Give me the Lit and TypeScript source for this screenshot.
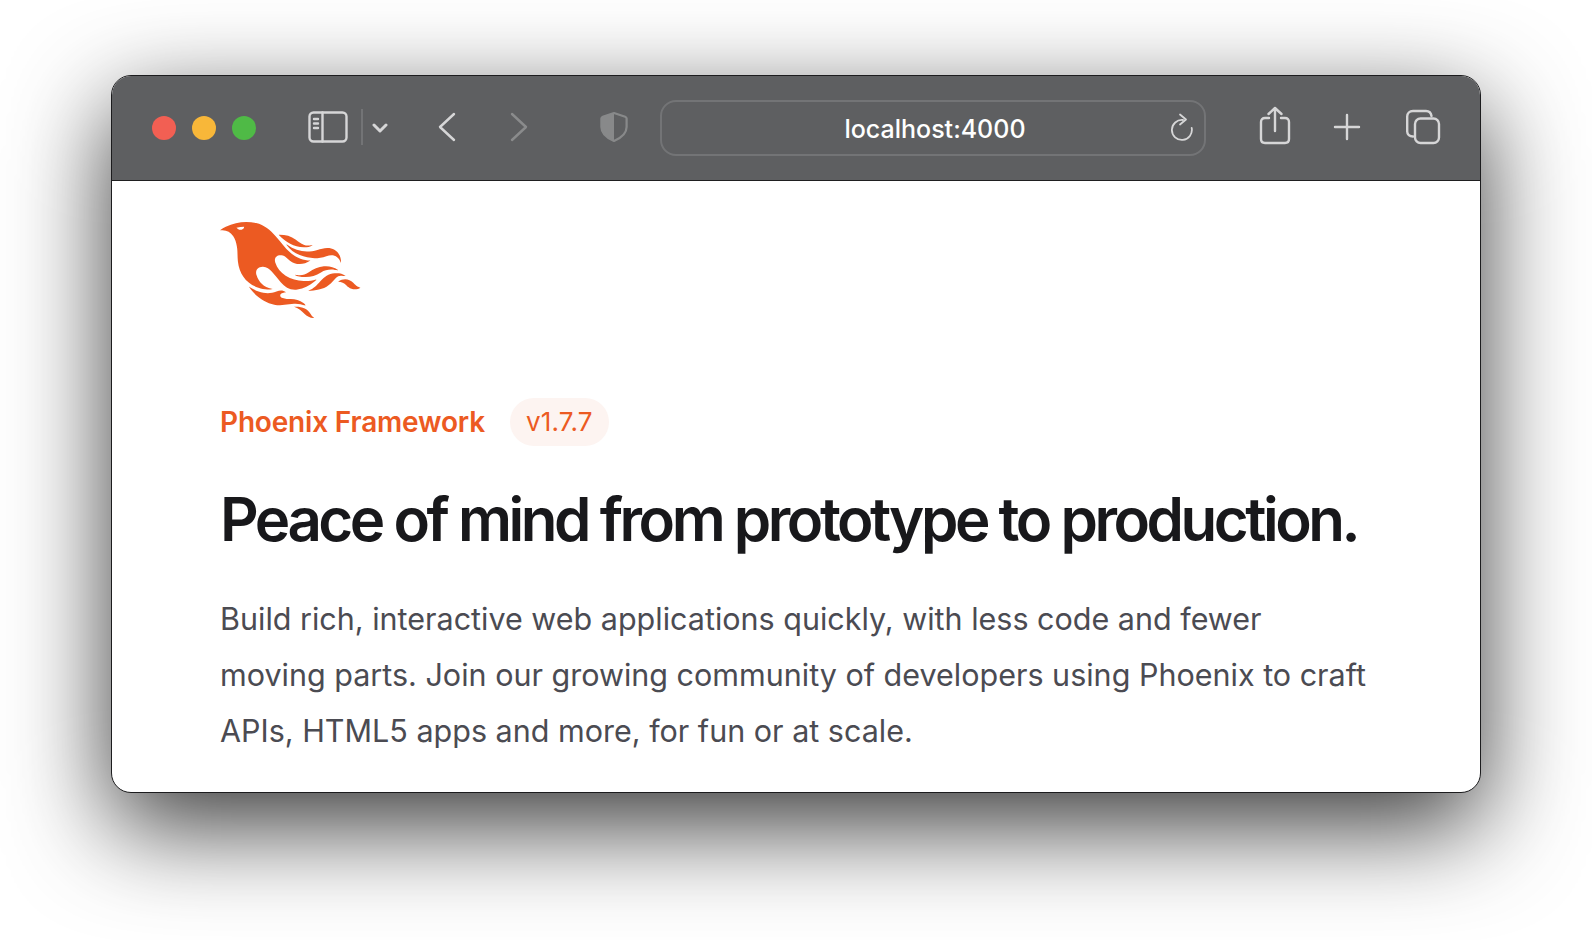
import { LitElement, html, css } from "lit";
import { customElement } from "lit/decorators.js";

const phoenix =
  "m26.371 33.477-.552-.1c-3.92-.729-6.397-3.1-7.57-6.829-.733-2.324.597-4.035 3.035-4.148 1.995-.092 3.362 1.055 4.57 2.39 1.557 1.72 2.984 3.558 4.514 5.305 2.202 2.515 4.797 4.134 8.347 3.634 3.183-.448 5.958-1.725 8.371-3.828.363-.316.761-.592 1.144-.886l-.241-.284c-2.027.63-4.093.841-6.205.735-3.195-.16-6.24-.828-8.964-2.582-2.486-1.601-4.319-3.746-5.19-6.611-.704-2.315.736-3.934 3.135-3.6.948.133 1.746.56 2.463 1.165.583.493 1.143 1.015 1.738 1.493 2.8 2.25 6.712 2.375 10.265-.068-5.842-.026-9.817-3.24-13.308-7.313-1.366-1.594-2.7-3.216-4.095-4.785-2.698-3.036-5.692-5.71-9.79-6.623C12.8-.623 7.745.14 2.893 2.361 1.926 2.804.997 3.319 0 4.149c.494 0 .763.006 1.032 0 2.446-.064 4.28 1.023 5.602 3.024.962 1.457 1.415 3.104 1.761 4.798.513 2.515.247 5.078.544 7.605.761 6.494 4.08 11.026 10.26 13.346 2.267.852 4.591 1.135 7.172.555ZM10.751 3.852c-.976.246-1.756-.148-2.56-.962 1.377-.343 2.592-.476 3.897-.528-.107.848-.607 1.306-1.336 1.49Zm32.002 37.924c-.085-.626-.62-.901-1.04-1.228-1.857-1.446-4.03-1.958-6.333-2-1.375-.026-2.735-.128-4.031-.61-.595-.22-1.26-.505-1.244-1.272.015-.78.693-1 1.31-1.184.505-.15 1.026-.247 1.6-.382-1.46-.936-2.886-1.065-4.787-.3-2.993 1.202-5.943 1.06-8.926-.017-1.684-.608-3.179-1.563-4.735-2.408l-.077.057c1.29 2.115 3.034 3.817 5.004 5.271 3.793 2.8 7.936 4.471 12.784 3.73A66.714 66.714 0 0 1 37 40.877c1.98-.16 3.866.398 5.753.899Zm-9.14-30.345c-.105-.076-.206-.266-.42-.069 1.745 2.36 3.985 4.098 6.683 5.193 4.354 1.767 8.773 2.07 13.293.51 3.51-1.21 6.033-.028 7.343 3.38.19-3.955-2.137-6.837-5.843-7.401-2.084-.318-4.01.373-5.962.94-5.434 1.575-10.485.798-15.094-2.553Zm27.085 15.425c.708.059 1.416.123 2.124.185-1.6-1.405-3.55-1.517-5.523-1.404-3.003.17-5.167 1.903-7.14 3.972-1.739 1.824-3.31 3.87-5.903 4.604.043.078.054.117.066.117.35.005.699.021 1.047.005 3.768-.17 7.317-.965 10.14-3.7.89-.86 1.685-1.817 2.544-2.71.716-.746 1.584-1.159 2.645-1.07Zm-8.753-4.67c-2.812.246-5.254 1.409-7.548 2.943-1.766 1.18-3.654 1.738-5.776 1.37-.374-.066-.75-.114-1.124-.17l-.013.156c.135.07.265.151.405.207.354.14.702.308 1.07.395 4.083.971 7.992.474 11.516-1.803 2.221-1.435 4.521-1.707 7.013-1.336.252.038.503.083.756.107.234.022.479.255.795.003-2.179-1.574-4.526-2.096-7.094-1.872Zm-10.049-9.544c1.475.051 2.943-.142 4.486-1.059-.452.04-.643.04-.827.076-2.126.424-4.033-.04-5.733-1.383-.623-.493-1.257-.974-1.889-1.457-2.503-1.914-5.374-2.555-8.514-2.5.05.154.054.26.108.315 3.417 3.455 7.371 5.836 12.369 6.008Zm24.727 17.731c-2.114-2.097-4.952-2.367-7.578-.537 1.738.078 3.043.632 4.101 1.728.374.388.763.768 1.182 1.106 1.6 1.29 4.311 1.352 5.883.155-1.861-.726-1.861-.726-3.588-2.452Zm-21.058 16.06c-1.858-3.46-4.981-4.24-8.59-4.008a9.667 9.667 0 0 1 2.977 1.39c.84.586 1.547 1.311 2.243 2.055 1.38 1.473 3.534 2.376 4.962 2.07-.656-.412-1.238-.848-1.592-1.507Z";

@customElement("app-root")
export class AppRoot extends LitElement {
  static styles = css`
    :host {
      display: block;
      width: 1592px;
      height: 940px;
      box-sizing: border-box;
      padding: 75px 111px 0 111px;
      background: #fff;
      overflow: hidden;
      font-family: Inter, "Liberation Sans", sans-serif;
    }
    .window {
      height: 718px;
      box-sizing: border-box;
      border: 1px solid #1c1c1e;
      border-radius: 20px;
      overflow: hidden;
      background: #fff;
      box-shadow: 0 33px 100px rgba(0, 0, 0, 0.78);
      display: flex;
      flex-direction: column;
    }
    .toolbar {
      height: 105px;
      flex: none;
      box-sizing: border-box;
      background: #5e5f61;
      border-bottom: 1px solid #1f1f20;
      display: flex;
      align-items: center;
      padding: 0 0 2px 40px;
    }
    .lights {
      display: flex;
      gap: 16px;
      margin: 2px 52px 0 0;
    }
    .light {
      width: 24px;
      height: 24px;
      border-radius: 50%;
    }
    .red { background: #f25f53; }
    .yellow { background: #f8b739; }
    .green { background: #4fba46; }
    svg.icon {
      display: block;
      flex: none;
      fill: none;
      stroke: #d6d6d7;
      stroke-width: 2.4;
      stroke-linecap: round;
      stroke-linejoin: round;
    }
    svg.chevron {
      stroke-width: 3;
      margin-top: 1px;
    }
    svg.back {
      margin-left: 49px;
    }
    svg.forward {
      margin-left: 52px;
      stroke: #8a8b8c;
    }
    svg.shield {
      margin-left: 71px;
      stroke: #88898a;
    }
    .shield-half {
      fill: #88898a;
      stroke: none;
    }
    svg.reload {
      position: absolute;
      right: 10px;
      top: 11px;
      stroke-width: 1.8;
    }
    svg.share {
      margin: 0 0 3px 53px;
    }
    svg.plus {
      margin-left: 42px;
    }
    svg.tabs {
      margin-left: 44px;
    }
    .divider {
      width: 2px;
      height: 36px;
      background: #737476;
      margin: 0 9px 0 13px;
    }
    .address {
      width: 546px;
      height: 56px;
      box-sizing: border-box;
      margin: 2px 0 0 32px;
      padding: 2px 0 0 4px;
      border: 2px solid #737476;
      border-radius: 16px;
      display: flex;
      align-items: center;
      justify-content: center;
      position: relative;
      color: #fff;
      font-size: 25px;
      font-weight: 500;
    }
    .content {
      padding: 41px 0 0 108px;
    }
    .logo {
      display: block;
      width: 142px;
      height: 96px;
      fill: #ec5a22;
    }
    .brand {
      display: flex;
      align-items: center;
      margin-top: 80px;
      height: 48px;
      color: #ec5a22;
      font-size: 28px;
      font-weight: 600;
      letter-spacing: -0.18px;
    }
    .badge {
      margin-left: 25px;
      padding: 0 16px;
      line-height: 48px;
      border-radius: 24px;
      background: #fdf4f1;
      font-size: 26px;
      font-weight: 400;
      letter-spacing: 0.2px;
    }
    h1 {
      margin: 37px 0 0;
      font-size: 60px;
      line-height: 72px;
      font-weight: 600;
      letter-spacing: -3.47px;
      color: #18181b;
      white-space: nowrap;
    }
    p {
      margin: 36px 0 0;
      font-size: 30.5px;
      line-height: 56px;
      color: #4b4b52;
      white-space: nowrap;
    }
  `;

  render() {
    return html`
      <div class="window">
        <div class="toolbar">
          <div class="lights">
            <div class="light red"></div>
            <div class="light yellow"></div>
            <div class="light green"></div>
          </div>
          <svg class="icon" width="40" height="32" viewBox="0 0 40 32">
            <rect x="1.5" y="1.5" width="37" height="29" rx="4" />
            <path d="M14.5 1.5v29" />
            <path d="M6 8h4M6 12.5h4M6 17h4" />
          </svg>
          <div class="divider"></div>
          <svg class="icon chevron" width="16" height="10" viewBox="0 0 16 10">
            <path d="M2 2l6 6 6-6" />
          </svg>
          <svg class="icon back" width="20" height="30" viewBox="0 0 20 30">
            <path d="M17 2L3 15l14 13" />
          </svg>
          <svg class="icon forward" width="20" height="30" viewBox="0 0 20 30">
            <path d="M3 2l14 13L3 28" />
          </svg>
          <svg class="icon shield" width="28" height="34" viewBox="0 0 30 34">
            <path d="M15 2L3 6c-1 .4-1.500 1-1.500 2v9c0 7 6.500 12 13.500 15 7-3 13.500-8 13.500-15V8c0-1-.5-1.600-1.500-2z" />
            <path class="shield-half" d="M15 2L3 6c-1 .4-1.500 1-1.500 2v9c0 7 6.500 12 13.500 15z" />
          </svg>
          <div class="address">
            localhost:4000
            <svg class="icon reload" width="24" height="28" viewBox="0 0 24 28">
              <path d="M13 7A10 10 0 1 0 21.700 15" />
              <path d="M10 1.500L16 6.500 10 11.500" />
            </svg>
          </div>
          <svg class="icon share" width="32" height="39" viewBox="0 0 32 39">
            <path d="M10 12H6c-2.500 0-4 1.500-4 4v17c0 2.500 1.500 4 4 4h20c2.500 0 4-1.500 4-4V16c0-2.500-1.500-4-4-4h-4" />
            <path d="M16 25V2M9.500 8L16 2l6.500 6" />
          </svg>
          <svg class="icon plus" width="28" height="28" viewBox="0 0 28 28">
            <path d="M14 2v24M2 14h24" />
          </svg>
          <svg class="icon tabs" width="36" height="36" viewBox="0 0 36 36">
            <path d="M8 27.500c-3.500 0-5.800-2-5.800-5V7.500C2.200 4.500 4.500 2 8 2h13c3 0 5 1.500 5.500 5" />
            <rect x="10" y="9.500" width="24" height="24.500" rx="5.500" />
          </svg>
        </div>
        <div class="content">
          <svg class="logo" viewBox="0 0 71 48" aria-hidden="true"><path d=${phoenix} /></svg>
          <div class="brand">Phoenix Framework <span class="badge">v1.7.7</span></div>
          <h1>Peace of mind from prototype to production.</h1>
          <p>
            Build rich, interactive web applications quickly, with less code and fewer<br />
            moving parts. Join our growing community of developers using Phoenix to craft<br />
            APIs, HTML5 apps and more, for fun or at scale.
          </p>
        </div>
      </div>
    `;
  }
}
